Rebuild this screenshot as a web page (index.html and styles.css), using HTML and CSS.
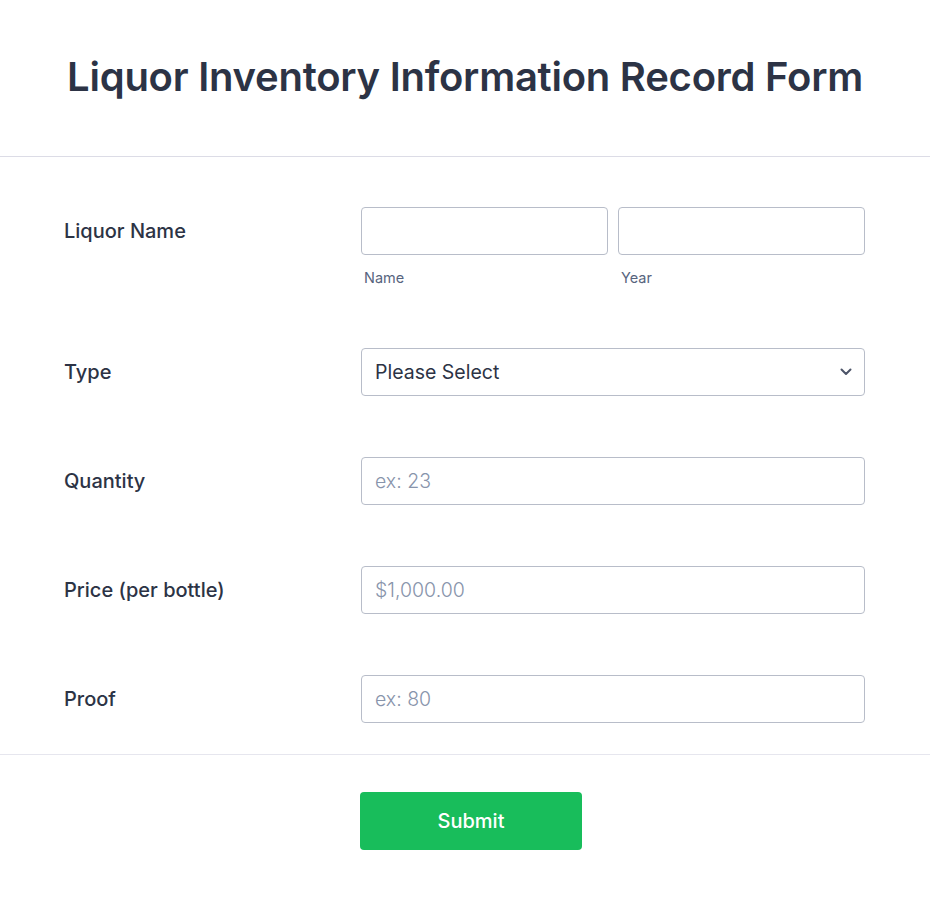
FILE: index.html
```html
<!DOCTYPE html>
<html lang="en">

<head>
    <meta charset="UTF-8">
    <meta name="viewport" content="width=device-width, initial-scale=1.0">
    <title>Liquor Inventory Information Record Form</title>
    <link rel="stylesheet" href="styles.css">
</head>

<body>
    <form class="form-all">
        <div class="form-header">
            <h1>Liquor Inventory Information Record Form</h1>
        </div>

        <ul class="form-list">
            <li class="form-line">
                <label class="form-label" for="liquor-name">Liquor Name</label>
                <div class="form-input">
                    <div class="split">
                        <div class="sub">
                            <input type="text" id="liquor-name" class="text-input">
                            <span class="sub-label">Name</span>
                        </div>
                        <div class="sub">
                            <input type="text" id="liquor-year" class="text-input">
                            <span class="sub-label">Year</span>
                        </div>
                    </div>
                </div>
            </li>

            <li class="form-line">
                <label class="form-label" for="liquor-type">Type</label>
                <div class="form-input">
                    <div class="select-wrap">
                        <select id="liquor-type" class="text-input dropdown">
                            <option>Please Select</option>
                            <option>Whiskey</option>
                            <option>Vodka</option>
                            <option>Rum</option>
                            <option>Gin</option>
                            <option>Tequila</option>
                        </select>
                        <svg class="chevron" width="12" height="8" viewBox="0 0 12 8">
                            <path d="M1.5 1.5 L6 6 L10.5 1.5" fill="none" stroke="#4c5468" stroke-width="2" stroke-linecap="round" stroke-linejoin="round"/>
                        </svg>
                    </div>
                </div>
            </li>

            <li class="form-line">
                <label class="form-label" for="quantity">Quantity</label>
                <div class="form-input">
                    <input type="text" id="quantity" class="text-input" placeholder="ex: 23">
                </div>
            </li>

            <li class="form-line">
                <label class="form-label" for="price">Price (per bottle)</label>
                <div class="form-input">
                    <input type="text" id="price" class="text-input" placeholder="$1,000.00">
                </div>
            </li>

            <li class="form-line">
                <label class="form-label" for="proof">Proof</label>
                <div class="form-input">
                    <input type="text" id="proof" class="text-input" placeholder="ex: 80">
                </div>
            </li>
        </ul>

        <div class="form-footer">
            <button type="submit" class="submit-button">Submit</button>
        </div>
    </form>
</body>

</html>
```

FILE: styles.css
```css
body {
    font-family: Inter, "Noto Sans", Arial, sans-serif;
    background-color: #fff;
    color: #2c3345;
    margin: 0;
    padding: 0;
}

.form-header {
    padding: 55px 0 57px;
    border-bottom: 1px solid #dcdce6;
    text-align: center;
}

.form-header h1 {
    margin: 0;
    font-size: 40px;
    line-height: 44px;
    font-weight: 600;
    letter-spacing: -0.25px;
    color: #2c3345;
}

.form-list {
    list-style: none;
    margin: 0;
    padding: 20px 0 0;
}

.form-line {
    display: flex;
    align-items: flex-start;
    padding: 30px 0 31px 64px;
}

.form-label {
    width: 297px;
    font-size: 20px;
    font-weight: 500;
    line-height: 48px;
    color: #2c3345;
}

.form-input {
    width: 504px;
}

.split {
    display: flex;
    gap: 10px;
}

.sub {
    flex: 1;
    display: flex;
    flex-direction: column;
}

.sub-label {
    margin-top: 14px;
    padding-left: 3px;
    font-size: 14.5px;
    line-height: 18px;
    color: #57647e;
}

.text-input {
    box-sizing: border-box;
    width: 100%;
    height: 48px;
    padding: 0 13px;
    font-family: inherit;
    font-size: 19.5px;
    color: #2c3345;
    background: #fff;
    border: 1px solid #b8bdc9;
    border-radius: 4px;
    outline: none;
}

.text-input::placeholder {
    color: #8894ab;
    font-weight: 300;
}

.select-wrap {
    position: relative;
}

.dropdown {
    appearance: none;
    -webkit-appearance: none;
}

.chevron {
    position: absolute;
    right: 13px;
    top: 20px;
    pointer-events: none;
}

.form-footer {
    border-top: 1px solid #e6e6ee;
    padding: 37px 0 40px 12px;
    display: flex;
    justify-content: center;
}

.submit-button {
    width: 222px;
    height: 58px;
    font-family: inherit;
    font-size: 20px;
    font-weight: 500;
    color: #fff;
    background-color: #18bd5b;
    border: none;
    border-radius: 4px;
    cursor: pointer;
}

.submit-button:hover {
    background-color: #16aa52;
}
```
